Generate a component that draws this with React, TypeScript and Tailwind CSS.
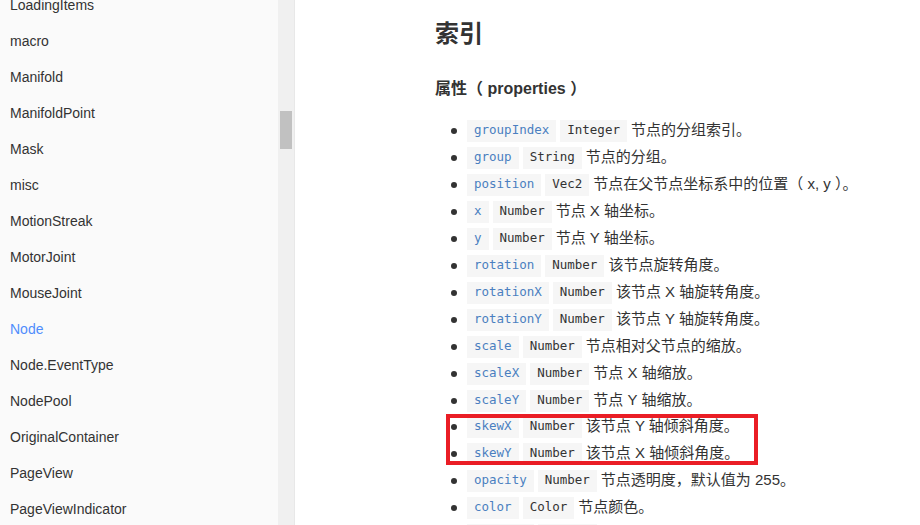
import React from "react";

const sideItems = [
  "LoadingItems",
  "macro",
  "Manifold",
  "ManifoldPoint",
  "Mask",
  "misc",
  "MotionStreak",
  "MotorJoint",
  "MouseJoint",
  "Node",
  "Node.EventType",
  "NodePool",
  "OriginalContainer",
  "PageView",
  "PageViewIndicator",
  "ParticleAsset",
];

type Prop = [string, string, string];

const propsTop: Prop[] = [
  ["groupIndex", "Integer", "节点的分组索引。"],
  ["group", "String", "节点的分组。"],
  ["position", "Vec2", "节点在父节点坐标系中的位置（ x, y ）。"],
  ["x", "Number", "节点 X 轴坐标。"],
  ["y", "Number", "节点 Y 轴坐标。"],
  ["rotation", "Number", "该节点旋转角度。"],
  ["rotationX", "Number", "该节点 X 轴旋转角度。"],
  ["rotationY", "Number", "该节点 Y 轴旋转角度。"],
  ["scale", "Number", "节点相对父节点的缩放。"],
  ["scaleX", "Number", "节点 X 轴缩放。"],
  ["scaleY", "Number", "节点 Y 轴缩放。"],
];

const propsBoxed: Prop[] = [
  ["skewX", "Number", "该节点 Y 轴倾斜角度。"],
  ["skewY", "Number", "该节点 X 轴倾斜角度。"],
];

const propsBottom: Prop[] = [
  ["opacity", "Number", "节点透明度，默认值为 255。"],
  ["color", "Color", "节点颜色。"],
  ["anchorX", "Number", "锚点的 X 轴位置。"],
];

const mono = { fontFamily: '"DejaVu Sans Mono", "Liberation Mono", monospace' };

function Row({ p }: { p: Prop }) {
  return (
    <div className="flex items-center h-[27px] ml-[13px]">
      <span className="w-[6px] h-[6px] rounded-full bg-[#333] ml-[3px] mr-[10px] shrink-0" />
      <span
        className="h-[22px] flex items-center px-[7px] bg-[#f6f6f6] text-[12.5px] text-[#4a7fc0] mr-[4px] whitespace-nowrap"
        style={mono}
      >
        {p[0]}
      </span>
      <span
        className="h-[22px] flex items-center px-[7px] bg-[#f6f6f6] text-[12.5px] text-[#333] mr-[4px] whitespace-nowrap"
        style={mono}
      >
        {p[1]}
      </span>
      <span className="text-[15px] text-[#333] whitespace-nowrap">{p[2]}</span>
    </div>
  );
}

export default function App() {
  return (
    <div
      className="flex h-[525px] w-[920px] overflow-hidden bg-white"
      style={{ fontFamily: '"Liberation Sans", "Noto Sans CJK SC", sans-serif' }}
    >
      <div className="w-[278px] shrink-0 bg-[#fafafa] overflow-hidden">
        <div className="-mt-[13px]">
          {sideItems.map((s) => (
            <div
              key={s}
              className={
                "h-[36px] flex items-center pl-[10px] text-[14px] " +
                (s === "Node" ? "text-[#4f8dfd]" : "text-[#333]")
              }
            >
              {s}
            </div>
          ))}
        </div>
      </div>
      <div className="w-[17px] shrink-0 bg-[#f0f0f0] pt-[111px] border-r border-[#e8e8e8]">
        <div className="mx-[2px] h-[38px] bg-[#c1c1c1]" />
      </div>
      <div className="flex-1 pl-[140px] overflow-hidden">
        <h1 className="text-[24px] leading-[32px] font-bold text-[#333] mt-[18px]">索引</h1>
        <h3 className="text-[16px] leading-[24px] font-bold text-[#333] mt-[27px]">属性（ properties ）</h3>
        <div className="mt-[16px]">
          {propsTop.map((p) => (
            <Row key={p[0]} p={p} />
          ))}
          <div className="relative -mt-[1px]">
            {propsBoxed.map((p) => (
              <Row key={p[0]} p={p} />
            ))}
            <div className="absolute left-[11px] w-[312px] top-[1px] bottom-[2px] border-4 border-[#ea1d25] pointer-events-none" />
          </div>
          {propsBottom.map((p) => (
            <Row key={p[0]} p={p} />
          ))}
        </div>
      </div>
    </div>
  );
}
